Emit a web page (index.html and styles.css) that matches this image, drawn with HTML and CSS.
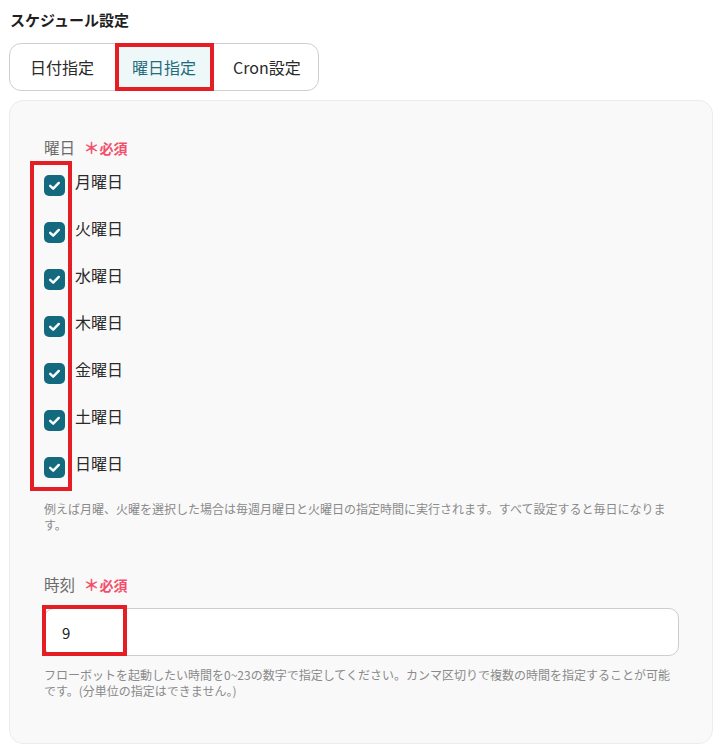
FILE: index.html
```html
<!DOCTYPE html>
<html lang="ja">
<head>
<meta charset="utf-8">
<link rel="stylesheet" href="styles.css">
</head>
<body>
<h1 class="title">スケジュール設定</h1>
<div class="tabs">
  <div class="tab">日付指定</div>
  <div class="tab tab-active">曜日指定<span class="mark mark-tab"></span></div>
  <div class="tab">Cron設定</div>
</div>
<div class="panel">
  <div class="label">曜日 <span class="req"><span class="ast">＊</span>必須</span></div>
  <div class="days">
    <span class="mark mark-days"></span>
    <div class="day"><svg class="cb" viewBox="0 0 21 21"><rect width="21" height="21" rx="5" fill="#136a7f"/><path d="M6.2 10.8l3 2.9 5.6-5.8" fill="none" stroke="#fff" stroke-width="2.4" stroke-linecap="round" stroke-linejoin="round"/></svg><span>月曜日</span></div>
    <div class="day"><svg class="cb" viewBox="0 0 21 21"><rect width="21" height="21" rx="5" fill="#136a7f"/><path d="M6.2 10.8l3 2.9 5.6-5.8" fill="none" stroke="#fff" stroke-width="2.4" stroke-linecap="round" stroke-linejoin="round"/></svg><span>火曜日</span></div>
    <div class="day"><svg class="cb" viewBox="0 0 21 21"><rect width="21" height="21" rx="5" fill="#136a7f"/><path d="M6.2 10.8l3 2.9 5.6-5.8" fill="none" stroke="#fff" stroke-width="2.4" stroke-linecap="round" stroke-linejoin="round"/></svg><span>水曜日</span></div>
    <div class="day"><svg class="cb" viewBox="0 0 21 21"><rect width="21" height="21" rx="5" fill="#136a7f"/><path d="M6.2 10.8l3 2.9 5.6-5.8" fill="none" stroke="#fff" stroke-width="2.4" stroke-linecap="round" stroke-linejoin="round"/></svg><span>木曜日</span></div>
    <div class="day"><svg class="cb" viewBox="0 0 21 21"><rect width="21" height="21" rx="5" fill="#136a7f"/><path d="M6.2 10.8l3 2.9 5.6-5.8" fill="none" stroke="#fff" stroke-width="2.4" stroke-linecap="round" stroke-linejoin="round"/></svg><span>金曜日</span></div>
    <div class="day"><svg class="cb" viewBox="0 0 21 21"><rect width="21" height="21" rx="5" fill="#136a7f"/><path d="M6.2 10.8l3 2.9 5.6-5.8" fill="none" stroke="#fff" stroke-width="2.4" stroke-linecap="round" stroke-linejoin="round"/></svg><span>土曜日</span></div>
    <div class="day"><svg class="cb" viewBox="0 0 21 21"><rect width="21" height="21" rx="5" fill="#136a7f"/><path d="M6.2 10.8l3 2.9 5.6-5.8" fill="none" stroke="#fff" stroke-width="2.4" stroke-linecap="round" stroke-linejoin="round"/></svg><span>日曜日</span></div>
  </div>
  <p class="help">例えば月曜、火曜を選択した場合は毎週月曜日と火曜日の指定時間に実行されます。すべて設定すると毎日になります。</p>
  <div class="label label-time">時刻 <span class="req"><span class="ast">＊</span>必須</span></div>
  <div class="input-wrap">
    <div class="input">9</div>
    <span class="mark mark-input"></span>
  </div>
  <p class="help help-time">フローボットを起動したい時間を0~23の数字で指定してください。カンマ区切りで複数の時間を指定することが可能です。(分単位の指定はできません。)</p>
</div>
</body>
</html>
```

FILE: styles.css
```css
* { box-sizing: border-box; }
body {
  margin: 0;
  padding: 9px 12px 0 9px;
  background: #fff;
  font-family: "Noto Sans CJK JP", "Noto Sans", sans-serif;
  color: #222;
}
.title {
  margin: 0 0 12px 1px;
  font-size: 15px;
  line-height: 22px;
  font-weight: 700;
  color: #1f1f1f;
}
.tabs {
  display: inline-flex;
  height: 48px;
  border: 1px solid #cfcfcf;
  border-radius: 12px;
  background: #fff;
}
.tab {
  position: relative;
  display: flex;
  align-items: center;
  padding: 0 18px 0 17px;
  font-size: 16px;
  color: #2a2a2a;
}
.tab:first-child { padding: 0 21px 0 20px; }
.tab:last-child { padding: 0 17px 0 19px; }
.tab-active {
  background: #eff8f8;
  color: #1f6b7c;
}
.mark {
  position: absolute;
  border: 4px solid #e41e24;
  pointer-events: none;
}
.mark-tab { left: 0; right: 0; top: -1px; bottom: -1px; }
.panel {
  margin-top: 9px;
  width: 704px;
  background: #f9f9f9;
  border: 1px solid #ececec;
  border-radius: 14px;
  padding: 36px 33px 44px 34px;
}
.label {
  font-size: 15.5px;
  line-height: 20px;
  color: #6a6a6a;
}
.req {
  margin-left: 5px;
  color: #f2506a;
  font-size: 14px;
  font-weight: 700;
}
.ast { font-size: 16px; }
.days {
  position: relative;
  margin-top: 13px;
  display: flex;
  flex-direction: column;
}
.mark-days { left: -14px; top: -10px; width: 42px; height: 330px; }
.day {
  display: flex;
  align-items: flex-start;
  gap: 10px;
  height: 47px;
  font-size: 16px;
  line-height: 20px;
  color: #2a2a2a;
}
.cb { width: 21px; height: 21px; margin-top: 4px; flex: none; }
.help {
  margin: 1px 0 0;
  font-size: 12px;
  line-height: 16px;
  color: #8a8a8a;
}
.label-time { margin-top: 41px; }
.input-wrap {
  position: relative;
  margin-top: 13px;
}
.input {
  height: 48px;
  background: #fff;
  border: 1px solid #cdcdcd;
  border-radius: 10px;
  padding-left: 17px;
  display: flex;
  align-items: center;
  font-size: 15px;
  color: #222;
}
.mark-input { left: -2px; top: -3px; width: 85px; height: 51px; }
.help-time { margin-top: 11px; }
```
